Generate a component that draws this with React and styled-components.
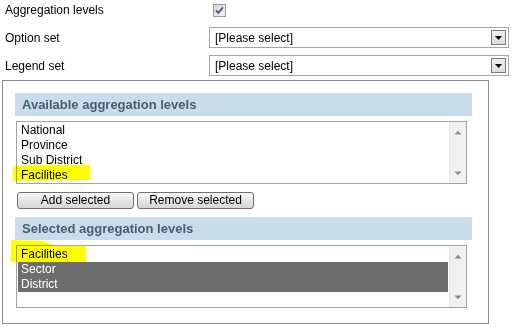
import React from 'react';
import styled, { createGlobalStyle } from 'styled-components';

const Global = createGlobalStyle`
  html, body { margin: 0; padding: 0; background: #fff; }
  body {
    font-family: "Liberation Sans", Arial, sans-serif;
    font-size: 12px;
    color: #000;
    width: 521px;
    height: 327px;
    overflow: hidden;
  }
`;

const Page = styled.div`
  position: relative;
  width: 521px;
  height: 327px;
`;

const Row = styled.div`
  display: flex;
  align-items: center;
  height: ${p => p.$h}px;
  margin-top: ${p => p.$mt || 0}px;
  padding-left: 5px;
`;

const Label = styled.div`
  width: 204px;
  line-height: 14px;
`;

const Check = styled.svg`
  display: block;
  margin-left: 4px;
`;

const Select = styled.div`
  box-sizing: border-box;
  width: 300px;
  height: 21px;
  border: 1px solid #a6a6a6;
  display: flex;
  align-items: center;
  justify-content: space-between;
  padding: 0 2px 0 5px;
  background: #fff;
`;

const SelectText = styled.span`
  line-height: 14px;
`;

const DropBtn = styled.span`
  box-sizing: border-box;
  width: 15px;
  height: 15px;
  border: 1px solid #7a7a7a;
  background: linear-gradient(#f0f0f0, #dcdcdc);
  display: flex;
  align-items: center;
  justify-content: center;
`;

const Panel = styled.div`
  box-sizing: border-box;
  width: 487px;
  height: 244px;
  margin: 4px 0 0 2px;
  border: 1px solid #8a8a8a;
  padding: 12px 0 0 12px;
`;

const Header = styled.div`
  box-sizing: border-box;
  width: 457px;
  height: 23px;
  margin-top: ${p => p.$mt || 0}px;
  background: #c9dcea;
  color: #4b5b74;
  font-weight: bold;
  font-size: 13px;
  padding-left: 7px;
  display: flex;
  align-items: center;
`;

const ListBox = styled.div`
  box-sizing: border-box;
  width: 451px;
  height: 63px;
  margin: 5px 0 0 1px;
  border: 1px solid #a3a3a3;
  display: flex;
  background: #fff;
`;

const ListContent = styled.div`
  width: 432px;
  padding: 1px;
  box-sizing: border-box;
`;

const Option = styled.div`
  height: 15px;
  line-height: 15px;
  padding-left: 3px;
  white-space: nowrap;
  background: ${p => (p.$sel ? '#6d6d6d' : 'transparent')};
  color: ${p => (p.$sel ? '#fff' : '#000')};
`;

const ScrollBar = styled.div`
  flex: 1;
  background: #f0f0f0;
  border-left: 1px solid #e6e6e6;
  display: flex;
  flex-direction: column;
  justify-content: space-between;
  align-items: center;
  padding: 8px 0 7px;
  box-sizing: border-box;
`;

const ButtonRow = styled.div`
  display: flex;
  gap: 3px;
  margin: 8px 0 0 2px;
`;

const Button = styled.button`
  box-sizing: border-box;
  width: 117px;
  height: 17px;
  border: 1px solid #707070;
  border-radius: 3px;
  background: linear-gradient(#f8f8f8, #e6e6e6 50%, #d6d6d6);
  font-family: "Liberation Sans", Arial, sans-serif;
  font-size: 12px;
  color: #000;
  padding: 0;
  line-height: 15px;
`;

const Marker = styled.svg`
  position: absolute;
  left: 0;
  top: 0;
  pointer-events: none;
  mix-blend-mode: multiply;
`;

const Arrow = ({ up }) => (
  <svg width="8" height="5" viewBox="0 0 8 5">
    <path d={up ? 'M0.5 4.5 L4 0.8 L7.5 4.5 Z' : 'M0.5 0.5 L4 4.2 L7.5 0.5 Z'} fill="#8c8c8c" />
  </svg>
);

const List = ({ items }) => (
  <ListBox>
    <ListContent>
      {items.map(it => (
        <Option key={it.t} $sel={it.sel}>{it.t}</Option>
      ))}
    </ListContent>
    <ScrollBar>
      <Arrow up />
      <Arrow />
    </ScrollBar>
  </ListBox>
);

const Dropdown = () => (
  <Select>
    <SelectText>[Please select]</SelectText>
    <DropBtn>
      <svg width="7" height="4" viewBox="0 0 7 4">
        <path d="M0 0 L7 0 L3.5 4 Z" fill="#000" />
      </svg>
    </DropBtn>
  </Select>
);

export default function App() {
  return (
    <Page>
      <Global />
      <Row $h={20}>
        <Label>Aggregation levels</Label>
        <Check width="13" height="13" viewBox="0 0 13 13">
          <defs>
            <linearGradient id="cb" x1="0" y1="0" x2="1" y2="1">
              <stop offset="0" stopColor="#d6d6d6" />
              <stop offset="1" stopColor="#f2f2f2" />
            </linearGradient>
          </defs>
          <rect x="0.5" y="0.5" width="12" height="12" fill="url(#cb)" stroke="#9a9a9a" />
          <path d="M3 6.3 L5.4 8.9 L10 3.4" fill="none" stroke="#4a5590" strokeWidth="1.8" />
        </Check>
      </Row>
      <Row $h={21} $mt={7}>
        <Label>Option set</Label>
        <Dropdown />
      </Row>
      <Row $h={21} $mt={7}>
        <Label>Legend set</Label>
        <Dropdown />
      </Row>
      <Panel>
        <Header>Available aggregation levels</Header>
        <List
          items={[
            { t: 'National' },
            { t: 'Province' },
            { t: 'Sub District' },
            { t: 'Facilities' },
          ]}
        />
        <ButtonRow>
          <Button>Add selected</Button>
          <Button>Remove selected</Button>
        </ButtonRow>
        <Header $mt={8}>Selected aggregation levels</Header>
        <List
          items={[
            { t: 'Facilities' },
            { t: 'Sector', sel: true },
            { t: 'District', sel: true },
          ]}
        />
      </Panel>
      <Marker width="521" height="327" viewBox="0 0 521 327">
        <polygon points="13,167 30,165 90,165 90,180 13,181" fill="#ffff00" />
        <polygon points="11,240 43,241 55,246 86,246 86,262 11,262" fill="#ffff00" />
      </Marker>
    </Page>
  );
}
